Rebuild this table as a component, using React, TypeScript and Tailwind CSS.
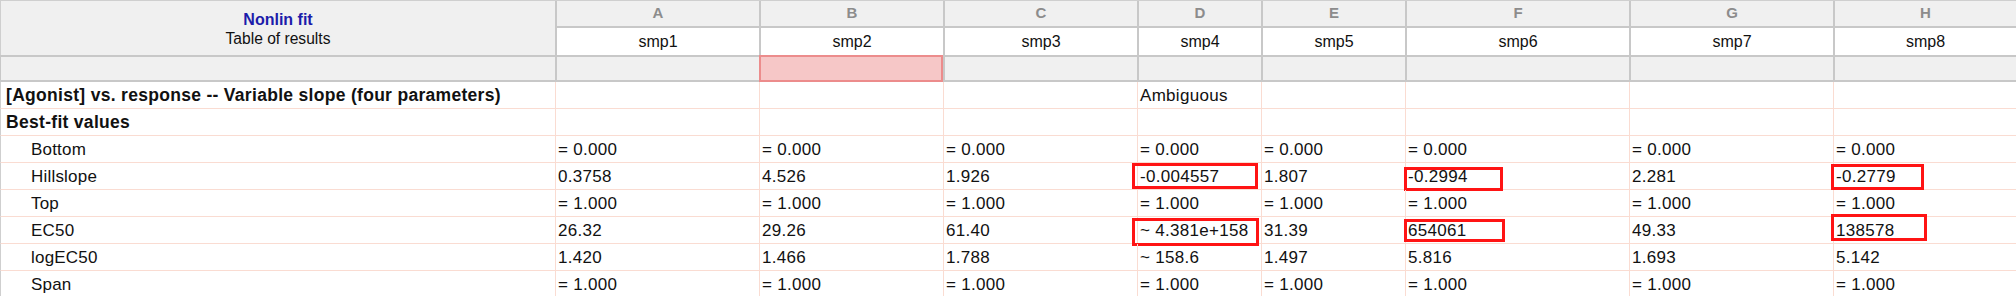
const SAMPLES = ["smp1", "smp2", "smp3", "smp4", "smp5", "smp6", "smp7", "smp8"];
const LETTERS = ["A", "B", "C", "D", "E", "F", "G", "H"];

type Cell = { v: string; box?: string };
type Row = { label: string; kind: "title" | "section" | "param"; cells: Cell[] };

const c = (...vals: string[]): Cell[] => vals.map((v) => ({ v }));

const ROWS: Row[] = [
  {
    label: "[Agonist] vs. response -- Variable slope (four parameters)",
    kind: "title",
    cells: c("", "", "", "Ambiguous", "", "", "", ""),
  },
  { label: "Best-fit values", kind: "section", cells: c("", "", "", "", "", "", "", "") },
  {
    label: "Bottom",
    kind: "param",
    cells: c("= 0.000", "= 0.000", "= 0.000", "= 0.000", "= 0.000", "= 0.000", "= 0.000", "= 0.000"),
  },
  {
    label: "Hillslope",
    kind: "param",
    cells: [
      { v: "0.3758" },
      { v: "4.526" },
      { v: "1.926" },
      { v: "-0.004557", box: "left-[-6px] top-0 w-[126px] h-[26px]" },
      { v: "1.807" },
      { v: "-0.2994", box: "left-[-2px] top-[4px] w-[99px] h-[24px]" },
      { v: "2.281" },
      { v: "-0.2779", box: "left-[-3px] top-[1px] w-[93px] h-[26px]" },
    ],
  },
  {
    label: "Top",
    kind: "param",
    cells: c("= 1.000", "= 1.000", "= 1.000", "= 1.000", "= 1.000", "= 1.000", "= 1.000", "= 1.000"),
  },
  {
    label: "EC50",
    kind: "param",
    cells: [
      { v: "26.32" },
      { v: "29.26" },
      { v: "61.40" },
      { v: "~ 4.381e+158", box: "left-[-6px] top-[1px] w-[127px] h-[28px]" },
      { v: "31.39" },
      { v: "654061", box: "left-[-2px] top-[2px] w-[101px] h-[23px]" },
      { v: "49.33" },
      { v: "138578", box: "left-[-3px] top-[-3px] w-[96px] h-[27px]" },
    ],
  },
  {
    label: "logEC50",
    kind: "param",
    cells: c("1.420", "1.466", "1.788", "~ 158.6", "1.497", "5.816", "1.693", "5.142"),
  },
  {
    label: "Span",
    kind: "param",
    cells: c("= 1.000", "= 1.000", "= 1.000", "= 1.000", "= 1.000", "= 1.000", "= 1.000", "= 1.000"),
  },
];

export default function App() {
  return (
    <div className="h-[296px] w-[2016px] overflow-hidden bg-white font-['Liberation_Sans',Arial,sans-serif] text-[#111]">
      <div className="grid grid-cols-[555px_204px_184px_194px_124px_144px_224px_204px_1fr] border-t border-[#cfcfcf]">
        {/* title block spans the letter row and the sample-name row */}
        <div className="row-span-2 flex h-[54px] flex-col items-center justify-center border-l border-[#cfcfcf] bg-[#f0f0f0] pt-[1px]">
          <span className="text-[16px] font-bold leading-[19px] text-[#1c1caa]">Nonlin fit</span>
          <span className="text-[15.6px] leading-[19px]">Table of results</span>
        </div>
        {LETTERS.map((l) => (
          <div
            key={l}
            className="flex h-[27px] items-center justify-center border-b-2 border-l-2 border-[#c8c8c8] bg-[#f0f0f0] text-[15px] font-bold text-[#8c8c8c]"
          >
            {l}
          </div>
        ))}
        {SAMPLES.map((s) => (
          <div
            key={s}
            className="flex h-[27px] items-center justify-center border-l-2 border-[#c8c8c8] bg-white text-[16px]"
          >
            {s}
          </div>
        ))}

        {/* format row */}
        <div className="h-[27px] border-y-2 border-l border-[#c8c8c8] bg-[#f0f0f0]" />
        {SAMPLES.map((s, i) =>
          i === 1 ? (
            <div key={s} className="h-[27px] border-2 border-[#ec8c8c] bg-[#f6c7c7]" />
          ) : (
            <div key={s} className="h-[27px] border-y-2 border-l-2 border-[#c8c8c8] bg-[#f0f0f0]" />
          )
        )}

        {ROWS.map((row) => (
          <RowCells key={row.label} row={row} />
        ))}
      </div>
    </div>
  );
}

function RowCells({ row }: { row: Row }) {
  const labelCls =
    row.kind === "param"
      ? "pl-[30px] font-normal text-[17px] tracking-[0.2px]"
      : "pl-[5px] font-bold text-[17.5px] tracking-[0.3px]";
  return (
    <>
      <div
        className={`flex h-[27px] items-center whitespace-nowrap border-b border-l border-b-[#fadcd2] border-l-[#cfcfcf] pt-[1px] ${labelCls}`}
      >
        {row.label}
      </div>
      {row.cells.map((cell, i) => (
        <div
          key={i}
          className="relative flex h-[27px] items-center whitespace-nowrap border-b border-l border-[#fadcd2] pl-[2px] pt-[1px] text-[17px] tracking-[0.3px]"
        >
          {cell.v}
          {cell.box && (
            <span className={`absolute border-[3px] border-[#ff1414] ${cell.box}`} />
          )}
        </div>
      ))}
    </>
  );
}
